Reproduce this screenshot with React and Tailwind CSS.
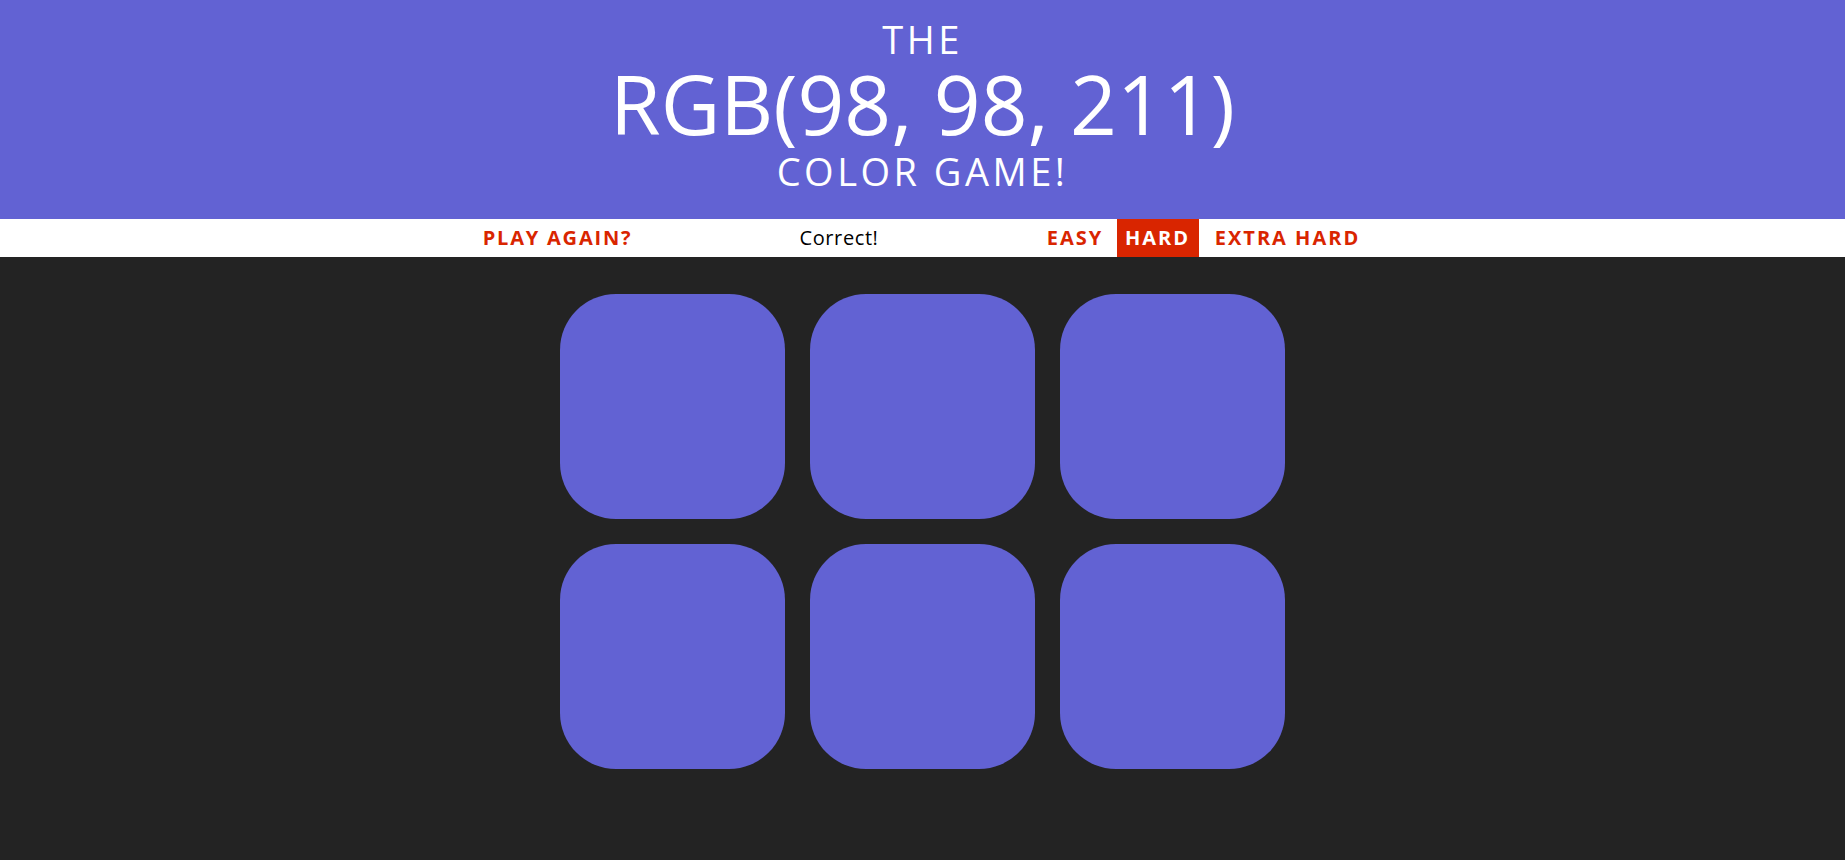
import React, { useState } from 'react';

const target = 'rgb(98, 98, 211)';
const modes = [
  { label: 'Easy', w: 'w-[75px]' },
  { label: 'Hard', w: 'w-[82px]' },
  { label: 'Extra Hard', w: 'w-[166px]' },
];

export default function App() {
  const [mode, setMode] = useState('Hard');
  const squares = Array.from({ length: 6 }, () => target);

  return (
    <div className="min-h-screen bg-[#232323] font-['Open_Sans',sans-serif]">
      {/* Header */}
      <h1 className="bg-[#6262d3] text-white text-center uppercase font-normal pt-[16px] pb-[20px]">
        <span className="block text-[38px] leading-[46px] tracking-[3.5px]">The</span>
        <span className="block text-[82px] leading-[82px]">{target}</span>
        <span className="block text-[38px] leading-[55px] tracking-[3.5px]">Color Game!</span>
      </h1>

      {/* Stripe */}
      <div className="bg-white h-[38px] flex justify-center text-[20px] leading-[38px]">
        <button className="w-[166px] text-center uppercase font-bold tracking-[1.8px] text-[#d92500]">
          Play Again?
        </button>
        <span className="w-[369px] ml-[14px] mr-[14px] text-center text-black tracking-[0.6px]">Correct!</span>
        {modes.map(({ label, w }, i) => (
          <button
            key={label}
            onClick={() => setMode(label)}
            className={`${w} ${i === 1 ? 'ml-[4px]' : ''} ${i === 2 ? 'ml-[6px]' : ''} text-center uppercase font-bold tracking-[2px] ${mode === label ? 'bg-[#d92500] text-white' : 'text-[#d92500]'}`}
          >
            {label}
          </button>
        ))}
      </div>

      {/* Squares */}
      <div className="w-[725px] mx-auto mt-[37px] grid grid-cols-3 gap-[25px]">
        {squares.map((c, i) => (
          <div key={i} className="h-[225px] rounded-[56px]" style={{ background: c }} />
        ))}
      </div>
    </div>
  );
}
